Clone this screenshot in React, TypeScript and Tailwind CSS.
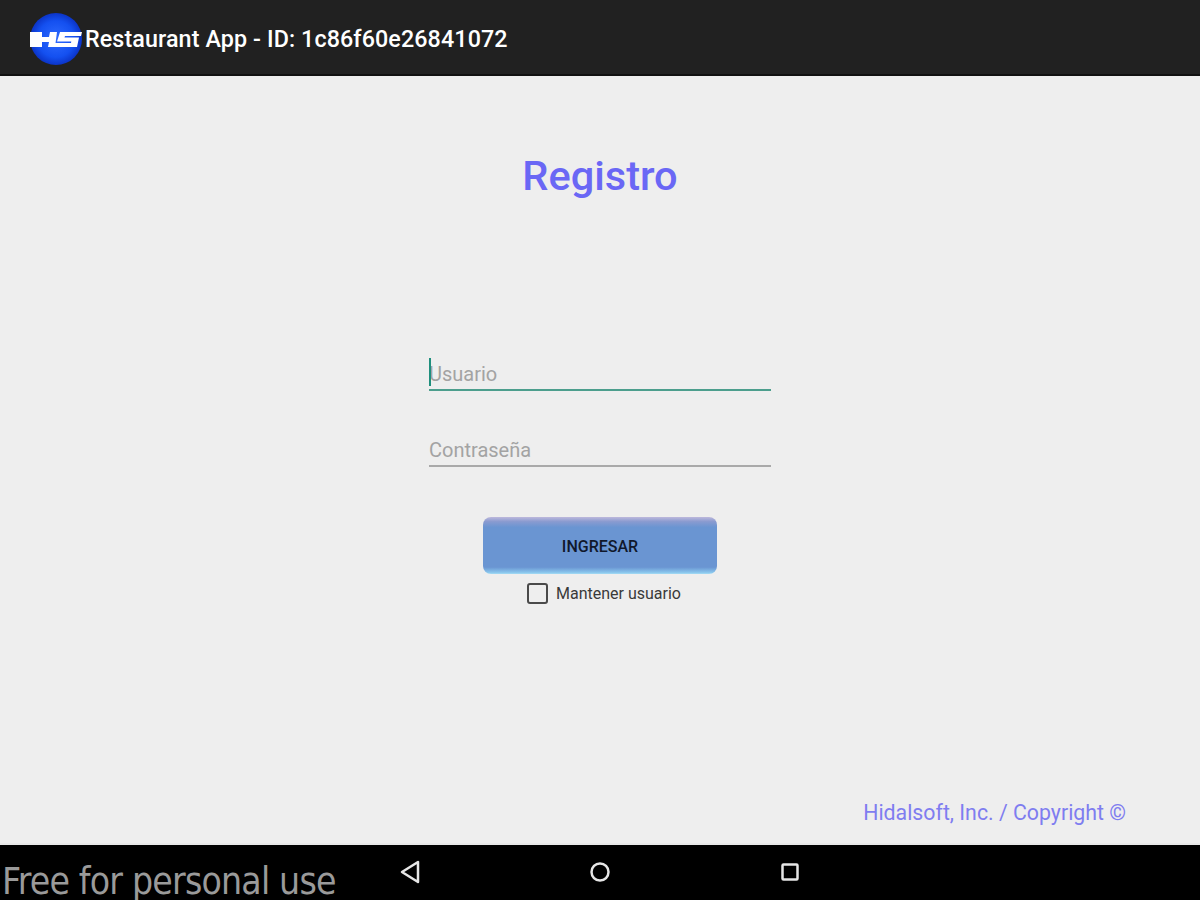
export default function App() {
  return (
    <div className="w-[1200px] h-[900px] flex flex-col overflow-hidden bg-[#eeeeee] font-['Roboto',sans-serif]">
      <header className="h-[76px] shrink-0 bg-[#212121] border-b-2 border-[#111111] flex items-center pl-[29px] pt-[4px]">
        <svg width="56" height="54" viewBox="0 0 56 54" className="shrink-0">
          <defs>
            <radialGradient id="ball" cx="50%" cy="50%" r="50%">
              <stop offset="0%" stopColor="#2f6bff" />
              <stop offset="70%" stopColor="#1450f0" />
              <stop offset="100%" stopColor="#0b34c8" />
            </radialGradient>
          </defs>
          <circle cx="27" cy="27" r="26" fill="url(#ball)" />
          <path d="M1 20h12v5h7l1-5h7l-2 15h-7l1-5h-7v5H1z" fill="#ffffff" />
          <path d="M31 20h22l-1 4H36l-.5 1.5H50l-2 9.5H24l1-4h17l.3-1.5H28z" fill="#ffffff" />
        </svg>
        <span className="text-[23.3px] leading-none font-medium text-white mt-[2px] tracking-[0.1px]">Restaurant App - ID: 1c86f60e26841072</span>
      </header>

      <main className="flex-1 flex flex-col items-center">
        <h1 className="mt-[76px] text-[41.5px] leading-[48px] font-medium text-[#6a67f5]">Registro</h1>

        <div className="mt-[149px] w-[342px] h-[42px] border-b-2 border-[#4c9e8d] relative flex items-end pb-[1px]">
          <span className="absolute left-0 top-[9px] w-[2px] h-[28px] bg-[#1f8f7d]" />
          <span className="text-[20px] leading-[28px] text-[#a3a3a3]">Usuario</span>
        </div>
        <div className="mt-[33px] w-[342px] h-[43px] border-b-2 border-[#a9a9a9] flex items-end pb-[1px]">
          <span className="text-[20px] leading-[28px] text-[#a3a3a3]">Contraseña</span>
        </div>

        <button className="mt-[50px] w-[234px] h-[57px] rounded-[8px] flex items-center justify-center pt-[2px] text-[16px] font-medium text-[#10182c] bg-[linear-gradient(to_bottom,#bdb8dc_0%,#8a9bd0_8%,#6a95d2_18%,#6a95d2_88%,#88c4ec_97%,#a4dcf4_100%)]">INGRESAR</button>

        <label className="mt-[8px] flex items-center gap-[8px] ml-[8px]">
          <span className="w-[21px] h-[21px] rounded-[3px] border-2 border-[#4a4a4a]" />
          <span className="mt-[2px] text-[16px] leading-[20px] text-[#3a3a3a]">Mantener usuario</span>
        </label>

        <div className="mt-auto mb-[16px] self-end mr-[74px] text-[21.3px] leading-[28px] text-[#7f7df0]">Hidalsoft, Inc. / Copyright ©</div>
      </main>

      <footer className="h-[57px] shrink-0 bg-black border-t-2 border-[#e8e8e8] grid grid-cols-[1fr_auto_1fr] grid-rows-[55px] items-center overflow-hidden">
        <span className="self-start pl-[2px] pt-[15px] text-[37px] leading-[44px] whitespace-nowrap text-[#9a9a9a] font-['DejaVu_Sans_Condensed','DejaVu_Sans',sans-serif] tracking-[-0.8px]">Free for personal use</span>
        <div className="flex items-center gap-[170px] -mt-[1px]">
          <svg width="20" height="24" viewBox="0 0 20 24" fill="none" stroke="#e6e6e6" strokeWidth="2.5" strokeLinejoin="round"><path d="M18 2v20L2 12z" /></svg>
          <svg width="20" height="20" viewBox="0 0 20 20" fill="none" stroke="#e6e6e6" strokeWidth="2.5"><circle cx="10" cy="10" r="8.5" /></svg>
          <svg width="20" height="20" viewBox="0 0 20 20" fill="none" stroke="#e6e6e6" strokeWidth="2.5"><rect x="2.5" y="2.5" width="15" height="15" rx="1" /></svg>
        </div>
        <span />
      </footer>
    </div>
  );
}
